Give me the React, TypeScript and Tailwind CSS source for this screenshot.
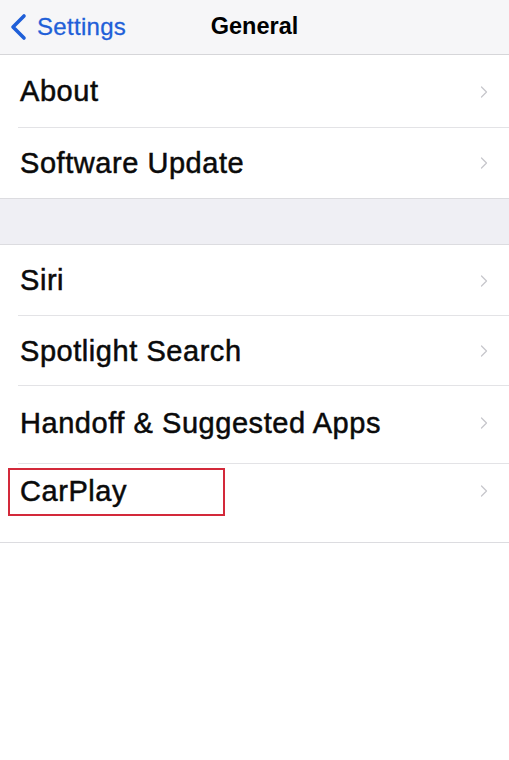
import { ChevronRight } from "lucide-react"

type Row = { label: string; h: string; extra?: string; boxed?: boolean }

const groupOne: Row[] = [
  { label: "About", h: "h-[73px]" },
  { label: "Software Update", h: "h-[70px]" },
]

const groupTwo: Row[] = [
  { label: "Siri", h: "h-[71px]" },
  { label: "Spotlight Search", h: "h-[70px]" },
  { label: "Handoff & Suggested Apps", h: "h-[78px]", extra: "pb-[4px]" },
  { label: "CarPlay", h: "h-[78px]", extra: "pb-[24px]", boxed: true },
]

function SettingsRow({ row, last }: { row: Row; last: boolean }) {
  return (
    <div className={`relative flex items-center bg-white pl-5 ${row.h} ${row.extra ?? ""}`}>
      {row.boxed && (
        <div className="absolute left-2 top-[4px] h-[48px] w-[217px] border-2 border-[#d3293a]" />
      )}
      <span className="flex-1 text-[29px] leading-none tracking-[0.55px] text-[#0a0a0a] [-webkit-text-stroke:0.5px_#0a0a0a]">
        {row.label}
      </span>
      <ChevronRight className="mr-[15px] h-[20px] w-[20px] text-[#c7c7cc]" strokeWidth={1.5} />
      {!last && <div className="absolute bottom-0 left-[18px] right-0 h-px bg-[#e3e3e6]" />}
    </div>
  )
}

function Group({ rows }: { rows: Row[] }) {
  return (
    <div className="border-b border-[#dcdce0]">
      {rows.map((r, i) => (
        <SettingsRow key={r.label} row={r} last={i === rows.length - 1} />
      ))}
    </div>
  )
}

export default function App() {
  return (
    <div className="min-h-[760px] w-full bg-white font-['Liberation_Sans',Arial,sans-serif]">
      <header className="relative flex h-[55px] items-center border-b border-[#d6d6d9] bg-[#f6f6f8]">
        <div className="flex items-center pl-[8px] text-[#1f5fd8]">
          <svg width="22" height="28" viewBox="0 0 22 28" fill="none">
            <path d="M16 3 L5 14 L16 25" stroke="currentColor" strokeWidth="3.6" strokeLinecap="round" strokeLinejoin="round" />
          </svg>
          <span className="ml-[7px] text-[24px] tracking-[0.3px] [-webkit-text-stroke:0.3px_#1f5fd8]">Settings</span>
        </div>
        <h1 className="absolute left-1/2 -translate-x-1/2 text-[23.5px] font-bold text-black">General</h1>
      </header>

      <Group rows={groupOne} />
      <div className="h-[46px] border-b border-[#dcdce0] bg-[#efeff4]" />
      <Group rows={groupTwo} />
    </div>
  )
}
